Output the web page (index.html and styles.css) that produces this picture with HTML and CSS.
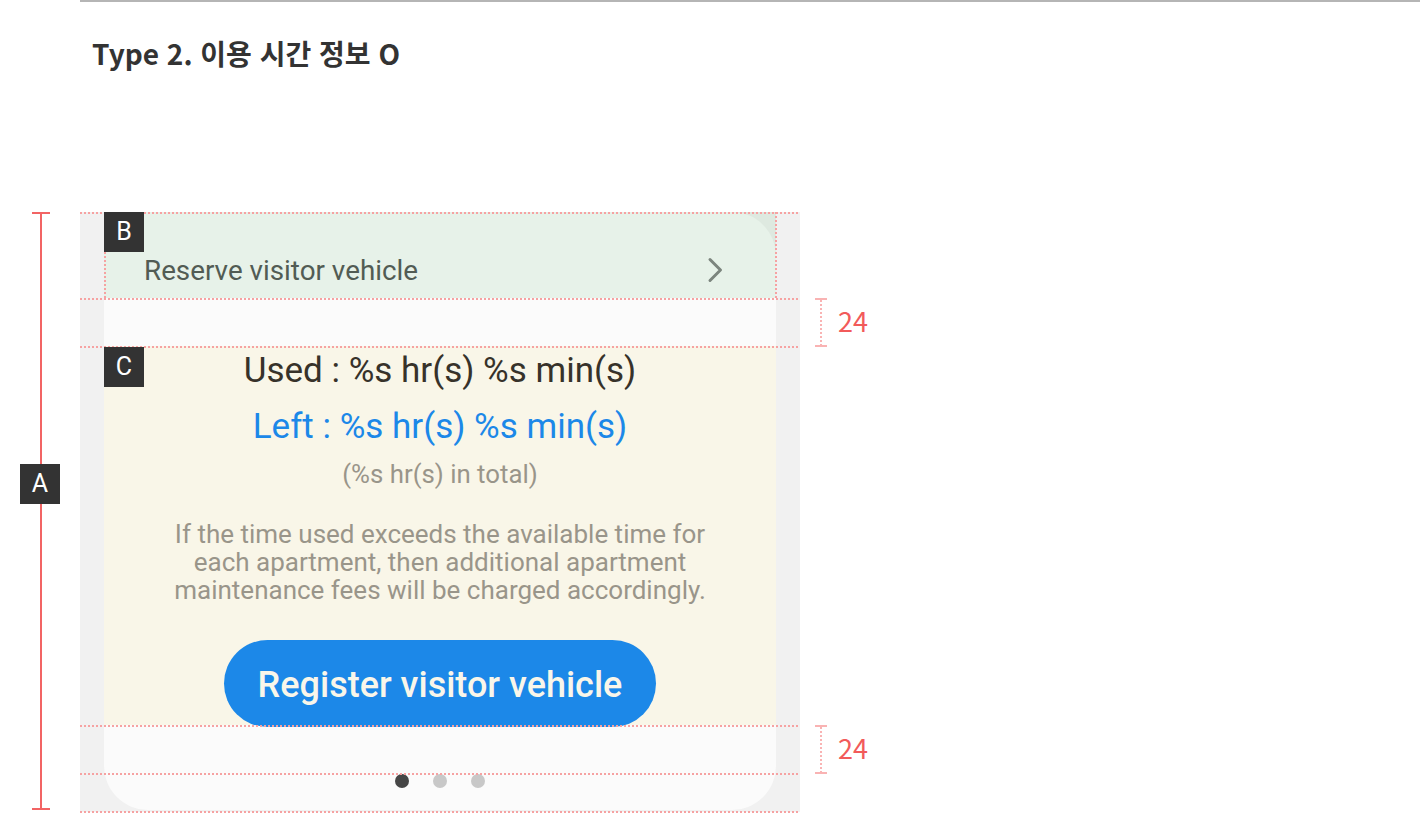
FILE: index.html
```html
<!DOCTYPE html>
<html lang="ko">
<head>
<meta charset="utf-8">
<title>Type 2</title>
<link rel="stylesheet" href="styles.css">
</head>
<body>
<div class="page">
  <div class="topline"></div>
  <h1 class="title">Type 2. 이용 시간 정보 O</h1>

  <div class="frame">
    <div class="card">
      <div class="header">
        <span class="header-text">Reserve visitor vehicle</span>
        <svg class="chevron" width="16" height="26" viewBox="0 0 16 26"><polyline points="3,2.5 13.5,13 3,23.5" fill="none" stroke="#7c857e" stroke-width="3" stroke-linecap="round" stroke-linejoin="round"/></svg>
      </div>
      <div class="gap"></div>
      <div class="section">
        <p class="used">Used : %s hr(s) %s min(s)</p>
        <p class="left">Left : %s hr(s) %s min(s)</p>
        <p class="total">(%s hr(s) in total)</p>
        <p class="notice">If the time used exceeds the available time for<br>each apartment, then additional apartment<br>maintenance fees will be charged accordingly.</p>
        <button class="register">Register visitor vehicle</button>
      </div>
      <div class="dots">
        <span class="dot on"></span>
        <span class="dot"></span>
        <span class="dot"></span>
      </div>
    </div>
  </div>

  <!-- spec annotations -->
  <div class="guide h" style="top:212px"></div>
  <div class="guide h" style="top:298px"></div>
  <div class="guide h" style="top:346px"></div>
  <div class="guide h" style="top:725px"></div>
  <div class="guide h" style="top:773px"></div>
  <div class="guide h" style="top:811px"></div>
  <div class="guide v" style="left:104px"></div>
  <div class="guide v" style="left:775px"></div>

  <div class="tag tag-b">B</div>
  <div class="tag tag-c">C</div>

  <div class="span-a">
    <div class="cap"></div>
    <div class="bar"></div>
    <div class="cap"></div>
  </div>
  <div class="tag tag-a">A</div>

  <div class="measure m1">
    <div class="mline"><span class="mcap"></span><span class="mstem"></span><span class="mcap"></span></div>
    <span class="mnum">24</span>
  </div>
  <div class="measure m2">
    <div class="mline"><span class="mcap"></span><span class="mstem"></span><span class="mcap"></span></div>
    <span class="mnum">24</span>
  </div>
</div>
</body>
</html>
```

FILE: styles.css
```css
* { box-sizing: border-box; }
html, body { margin: 0; padding: 0; background: #ffffff; }

.page {
  position: relative;
  width: 1420px;
  height: 814px;
  overflow: hidden;
  font-family: Roboto, "Noto Sans", sans-serif;
}

.topline {
  margin-left: 80px;
  height: 2px;
  background: #b5b5b5;
}

.title {
  margin: 31px 0 0 92px;
  height: 40px;
  font-family: "Noto Sans CJK KR", "Noto Sans", sans-serif;
  font-weight: 700;
  font-size: 28px;
  line-height: 40px;
  letter-spacing: 0;
  color: #333333;
}

.frame {
  margin: 139px 0 0 80px;
  width: 720px;
  padding: 0 24px 2px;
  background: #f1f1f1;
}

.card {
  background: #fbfbfb;
  border-radius: 0 44px 44px 44px;
  display: flex;
  flex-direction: column;
}

.header {
  height: 86px;
  padding: 0 53px 7px 40px;
  display: flex;
  align-items: flex-end;
  justify-content: space-between;
  background: rgba(61, 171, 81, 0.1);
}

.header-text {
  font-size: 27.8px;
  line-height: 36px;
  color: #525c54;
  padding-bottom: 2px;
}

.chevron {
  display: block;
  margin-bottom: 8px;
}

.gap { height: 48px; }

.section {
  height: 379px;
  background: #f9f6e8;
  padding-top: 3px;
  display: flex;
  flex-direction: column;
  align-items: center;
  text-align: center;
}

.section > * { flex-shrink: 0; }
.section p { margin: 0; }

.used {
  font-size: 35px;
  line-height: 44px;
  color: #37322a;
}

.left {
  margin-top: 12px !important;
  font-size: 35px;
  line-height: 44px;
  color: #1c88e8;
}

.total {
  margin-top: 9px !important;
  font-size: 25.8px;
  line-height: 32px;
  color: #99958a;
}

.notice {
  margin-top: 30px !important;
  font-size: 26px;
  line-height: 28px;
  color: #99958a;
}

.register {
  margin-top: 36px;
  width: 432px;
  height: 87px;
  border: 0;
  border-radius: 44px;
  background: #1c88e8;
  color: #f9f6ea;
  font-family: Roboto, sans-serif;
  font-weight: 500;
  font-size: 36px;
  padding: 3px 0 0;
}

.dots {
  margin-top: 49px;
  height: 14px;
  margin-bottom: 22px;
  display: flex;
  justify-content: center;
  gap: 24px;
}

.dot {
  width: 14px;
  height: 14px;
  border-radius: 50%;
  background: #c8c8c8;
}
.dot.on { background: #464646; }

/* ---------- spec annotations ---------- */
.guide { position: absolute; }
.guide.h {
  left: 80px;
  width: 720px;
  height: 2px;
  background: repeating-linear-gradient(90deg, #f6a2a2 0 2px, transparent 2px 4px);
}
.guide.v {
  top: 212px;
  width: 2px;
  height: 87px;
  background: repeating-linear-gradient(180deg, #f6a2a2 0 2px, transparent 2px 4px);
}

.tag {
  position: absolute;
  width: 40px;
  height: 40px;
  background: #333333;
  color: #ffffff;
  font-family: Roboto, sans-serif;
  font-size: 25px;
  line-height: 40px;
  text-align: center;
}
.tag-b { left: 104px; top: 212px; }
.tag-c { left: 104px; top: 347px; }
.tag-a { left: 20px; top: 464px; }

.span-a {
  position: absolute;
  left: 32px;
  top: 212px;
  width: 18px;
  height: 598px;
  display: flex;
  flex-direction: column;
  align-items: center;
}
.span-a .cap { width: 18px; height: 2px; background: #f26464; flex: none; }
.span-a .bar { width: 2px; flex: 1; background: #f26464; }

.measure {
  position: absolute;
  left: 815px;
  height: 49px;
  display: flex;
  align-items: center;
  gap: 11px;
}
.m1 { top: 298px; }
.m2 { top: 725px; }

.mline {
  width: 12px;
  height: 49px;
  display: flex;
  flex-direction: column;
  align-items: center;
}
.mcap { width: 12px; height: 2px; background: #f9b3b3; flex: none; }
.mstem {
  flex: 1;
  width: 2px;
  background: repeating-linear-gradient(180deg, #f9b3b3 0 2px, transparent 2px 4px);
}
.mnum {
  font-family: "Noto Sans CJK KR", "Noto Sans", sans-serif;
  font-size: 27px;
  line-height: 30px;
  color: #f25a5a;
  font-weight: 400;
  margin-top: -4px;
}
```
